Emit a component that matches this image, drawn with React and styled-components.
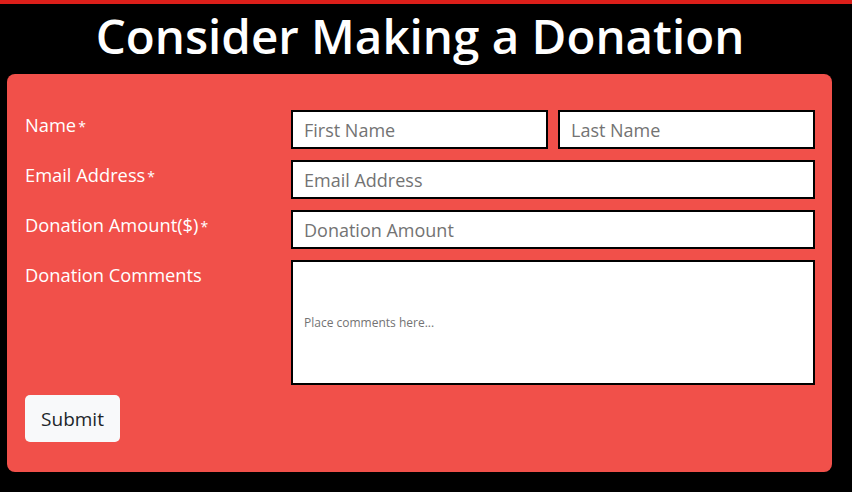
import React from "react";
import styled, { createGlobalStyle } from "styled-components";

const Global = createGlobalStyle`
  html, body { margin: 0; padding: 0; background: #000; }
  body { font-family: "Open Sans", "Noto Sans", sans-serif; }
  * { box-sizing: border-box; }
`;

const Page = styled.div`
  width: 852px;
  height: 492px;
  background: #000;
  border-top: 4px solid #dc1f1a;
  display: flex;
  flex-direction: column;
  align-items: flex-start;
  padding: 0 20px 20px 7px;
`;

const Title = styled.h1`
  margin: 0 0 7px -7px;
  width: 840px;
  text-align: center;
  color: #fff;
  font-size: 47.5px;
  font-weight: 600;
  line-height: 63px;
`;

const Card = styled.form`
  width: 825px;
  height: 398px;
  background: #f1504a;
  border-radius: 8px;
  padding: 36px 17px 0 18px;
  display: flex;
  flex-direction: column;
  gap: 11px;
`;

const Row = styled.div`
  display: grid;
  grid-template-columns: 266px 1fr;
  align-items: start;
`;

const Label = styled.label`
  color: #fff;
  font-size: 18.3px;
  line-height: 24px;
  padding-top: 3px;
`;

const Star = styled.span`
  font-size: 14px;
  margin-left: 2px;
`;

const Fields = styled.div`
  display: grid;
  grid-template-columns: ${(p) => (p.$split ? "1fr 1fr" : "1fr")};
  gap: 10px;
`;

const Input = styled.input`
  height: 39px;
  width: 100%;
  border: 2px solid #000;
  background: #fff;
  padding: 1px 11px 0;
  font-family: inherit;
  font-size: 18px;
  color: #212529;
  outline: none;
  &::placeholder { color: #737373; }
`;

const Comments = styled.textarea`
  height: 125px;
  width: 100%;
  border: 2px solid #000;
  background: #fff;
  padding: 52px 11px 0;
  font-family: inherit;
  font-size: 12px;
  resize: none;
  outline: none;
  &::placeholder { color: #737373; }
`;

const Submit = styled.button`
  margin-top: -1px;
  align-self: flex-start;
  width: 95px;
  height: 47px;
  border: none;
  border-radius: 5px;
  background: #f8f9fa;
  color: #212529;
  font-family: inherit;
  font-size: 19px;
`;

export default function App() {
  return (
    <>
      <Global />
      <Page>
        <Title>Consider Making a Donation</Title>
        <Card onSubmit={(e) => e.preventDefault()}>
          <Row>
            <Label>Name<Star>*</Star></Label>
            <Fields $split>
              <Input placeholder="First Name" />
              <Input placeholder="Last Name" />
            </Fields>
          </Row>
          <Row>
            <Label>Email Address<Star>*</Star></Label>
            <Fields>
              <Input placeholder="Email Address" />
            </Fields>
          </Row>
          <Row>
            <Label>Donation Amount($)<Star>*</Star></Label>
            <Fields>
              <Input placeholder="Donation Amount" />
            </Fields>
          </Row>
          <Row>
            <Label>Donation Comments</Label>
            <Fields>
              <Comments placeholder="Place comments here..." />
            </Fields>
          </Row>
          <Submit type="submit">Submit</Submit>
        </Card>
      </Page>
    </>
  );
}
